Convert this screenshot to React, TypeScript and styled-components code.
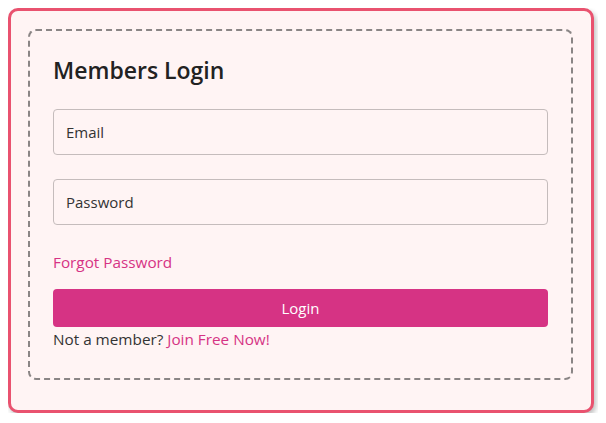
import React from 'react';
import styled, { createGlobalStyle } from 'styled-components';

const GlobalStyle = createGlobalStyle`
  body {
    margin: 8px;
    background: #ffffff;
    font-family: 'Open Sans', 'Noto Sans', sans-serif;
    color: #333333;
  }
  * { box-sizing: border-box; }
`;

const Card = styled.div`
  width: 586px;
  height: 405px;
  padding: 18px 18px 0 17px;
  background: #fff4f4;
  border: 3px solid #e9526f;
  border-radius: 10px;
  box-shadow: 2px 3px 5px rgba(0, 0, 0, 0.25);
`;

const Frame = styled.form`
  display: flex;
  flex-direction: column;
  padding: 25px 23px 27px 23px;
  border: 2px dashed #8a8585;
  border-radius: 8px;
`;

const Title = styled.h2`
  margin: 0 0 24px;
  font-size: 23px;
  line-height: 29px;
  font-weight: 600;
  color: #222222;
`;

const Input = styled.input<{ $last?: boolean }>`
  height: 46px;
  margin-bottom: ${(p) => (p.$last ? '25px' : '24px')};
  padding: 0 12px;
  font: inherit;
  font-size: 15px;
  color: #333333;
  background: #fff4f4;
  border: 1px solid #c5bcbc;
  border-radius: 4px;
  outline: none;

  &::placeholder {
    color: #333333;
  }
`;

const Link = styled.a`
  color: #d63384;
  text-decoration: none;
  cursor: pointer;
`;

const Line = styled.div`
  font-size: 15.3px;
  line-height: 24px;
`;

const Button = styled.button`
  height: 38px;
  margin: 15px 0 0;
  font: inherit;
  font-size: 15px;
  color: #ffffff;
  background: #d63384;
  border: none;
  border-radius: 4px;
  cursor: pointer;
`;

export default function App() {
  return (
    <>
      <GlobalStyle />
      <Card>
        <Frame onSubmit={(e) => e.preventDefault()}>
          <Title>Members Login</Title>
          <Input type="email" placeholder="Email" />
          <Input type="password" placeholder="Password" $last />
          <Line>
            <Link>Forgot Password</Link>
          </Line>
          <Button type="submit">Login</Button>
          <Line>
            Not a member? <Link>Join Free Now!</Link>
          </Line>
        </Frame>
      </Card>
    </>
  );
}
